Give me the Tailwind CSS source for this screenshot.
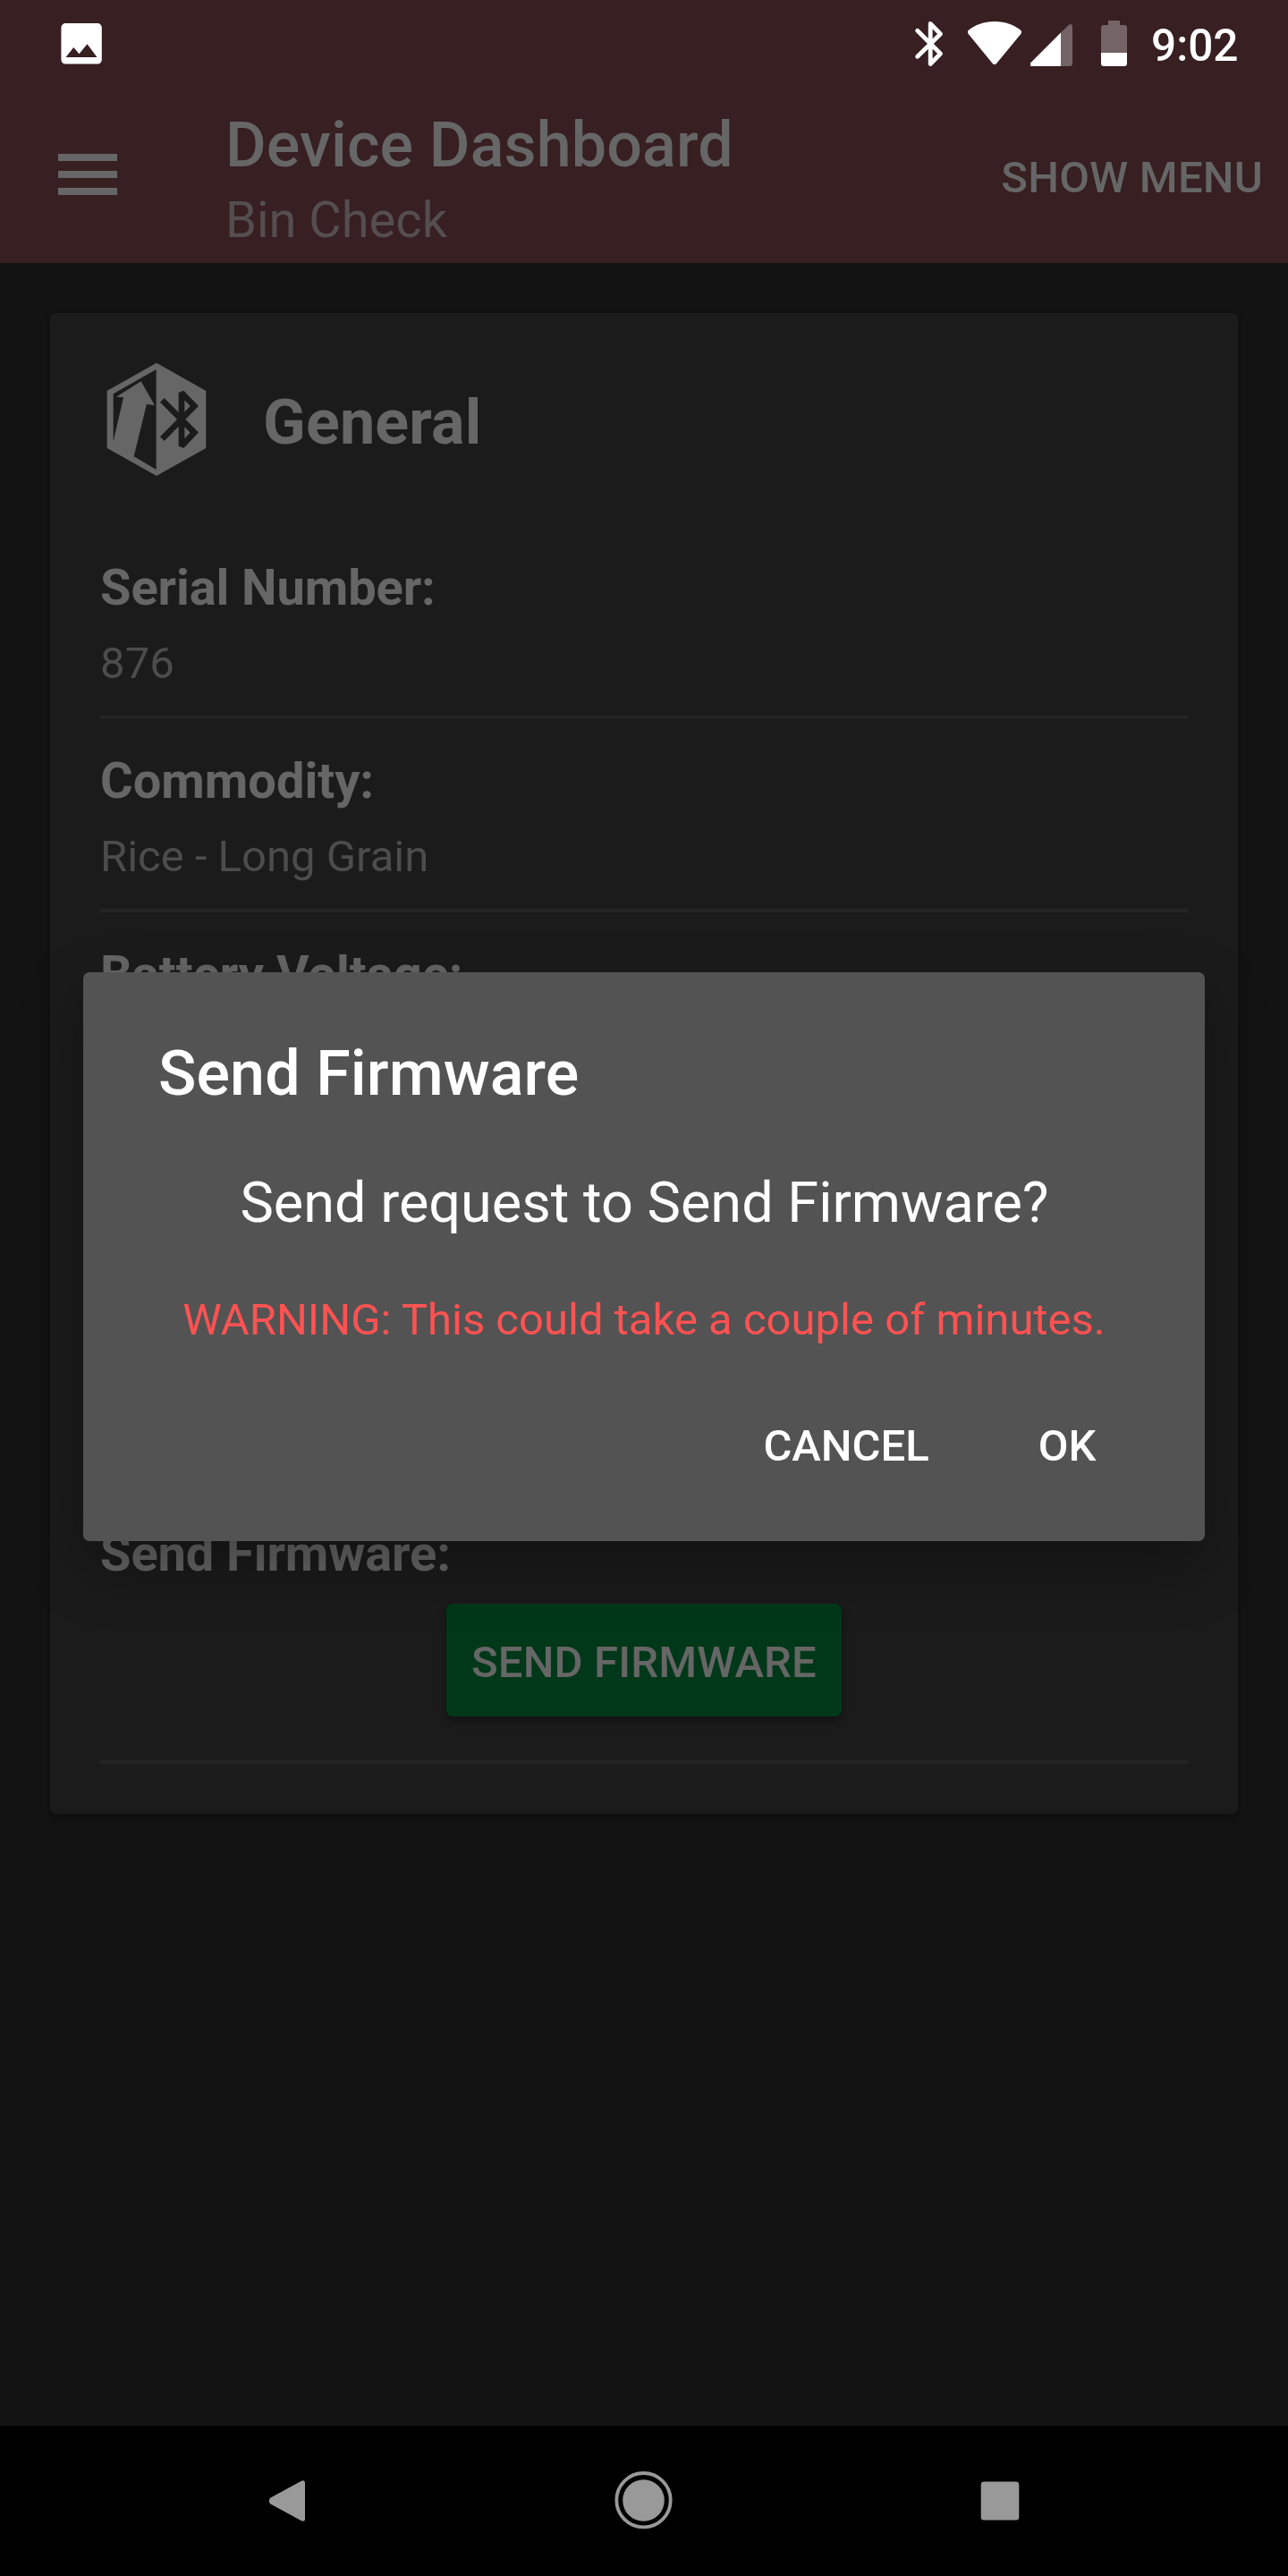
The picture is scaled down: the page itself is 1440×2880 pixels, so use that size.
<!DOCTYPE html>
<html lang="en">
<head>
<meta charset="utf-8">
<title>Device Dashboard</title>
<script src="https://cdn.jsdelivr.net/npm/@tailwindcss/browser@4"></script>
</head>
<body class="bg-[#131313]">
<div class="relative flex h-[2880px] w-[1440px] flex-col overflow-hidden bg-[#131313] font-['Roboto',sans-serif] text-[#666666]">

  <header class="h-[294px] shrink-0 bg-[#371f22]">
    <!-- Status bar -->
    <div class="flex h-[98px] items-start pr-[55px] pl-[68px] text-white">
      <svg class="h-[98px] w-[46px]" viewBox="68 0 46 98"><path fill="currentColor" fill-rule="evenodd" d="M73 26h36a4.800 4.800 0 0 1 4.800 4.800v36a4.800 4.800 0 0 1-4.800 4.800H73.200a4.800 4.800 0 0 1-4.800-4.800v-36A4.800 4.800 0 0 1 73.200 26zM73.500 64h35L97.500 49.300 88.500 60.300 82.300 53z"/></svg>
      <div class="ml-auto flex">
        <svg class="h-[98px] w-[33px]" viewBox="1022 0 33 98" fill="none" stroke="currentColor" stroke-width="4.800" stroke-linecap="round" stroke-linejoin="round"><path d="M1025.700 34.300 1051.500 60 1040.200 71.500V26.500L1051.500 38 1025.700 63.300"/></svg>
        <svg class="ml-[27px] h-[98px] w-[60px]" viewBox="1082 0 60 98" fill="currentColor"><path d="M1083.200 33.500C1090 28 1100 24 1112 24s22 4 28.800 9.500c1.600 1.300 1.600 3 .5 4.500L1114.500 70.500c-1.500 2-3.700 2-5.200 0L1082.700 38c-1.100-1.500-1.100-3.200.5-4.500z"/></svg>
        <svg class="ml-[10px] h-[98px] w-[48px]" viewBox="1152 0 48 98"><path fill="#756465" d="M1186 36.500 1195 27.800c1.800-1.600 4-.6 4 1.700V71a3 3 0 0 1-3 3h-10z"/><path fill="currentColor" d="M1186 36.500V74h-32c-2.500 0-3-2.300-1.500-4z"/></svg>
        <svg class="ml-[31px] h-[98px] w-[29px]" viewBox="1231 0 29 98"><path fill="#756465" d="M1239 23h13v5h5a3 3 0 0 1 3 3v28.500h-29V31a3 3 0 0 1 3-3h5z"/><path fill="currentColor" d="M1231 59h29v12a3 3 0 0 1-3 3h-23a3 3 0 0 1-3-3z"/></svg>
        <span class="mt-[23px] ml-[27px] w-[98px] text-[49.5px] leading-[56px] font-medium whitespace-nowrap">9:02</span>
      </div>
    </div>
    <!-- App bar -->
    <div class="flex h-[196px] items-start pr-[28px] pl-[65px]">
      <button class="mt-[73.5px] flex w-[66px] flex-col gap-[11px]" aria-label="Menu">
        <span class="h-[8px] w-full bg-current"></span>
        <span class="h-[8px] w-full bg-current"></span>
        <span class="h-[8px] w-full bg-current"></span>
      </button>
      <div class="mt-[22px] ml-[121px]">
        <h1 class="text-[70px] leading-[84px] font-medium tracking-[0.15px] whitespace-nowrap">Device Dashboard</h1>
        <p class="mt-[10px] text-[56px] leading-[64px] text-[#554e4f]">Bin Check</p>
      </div>
      <button class="mt-[73px] ml-auto text-[49px] leading-[56px] font-medium tracking-[0.2px] whitespace-nowrap">SHOW MENU</button>
    </div>
  </header>

  <main class="flex-1 px-[56px] pt-[56px]">
    <section class="flex h-[1678px] flex-col rounded-[7px] bg-[#1b1b1b] px-[56px] pb-[56px] shadow-[0_4px_12px_rgba(0,0,0,0.3)]">
      <div class="flex h-[238px] items-start">
        <svg class="mt-[45px] -ml-[2px] h-[145px] w-[130px]" viewBox="0 0 390 435">
          <path fill="#666666" d="M195 32 361 126V318L195 411 29 318V126z"/>
          <path fill="#1b1b1b" d="M194 54 50 136V296L84 148 60 146 143 94 189 175 162 170 119 346 194 390z"/>
          <path fill="none" stroke="#1b1b1b" stroke-width="20" stroke-miterlimit="2" d="M214 157 322 266 279 311V132L322 177 214 287"/>
        </svg>
        <h2 class="mt-[80px] ml-[54px] text-[70px] leading-[84px] font-bold tracking-[0.2px]">General</h2>
      </div>

      <div class="h-[216px] border-b-4 border-[#242424] pt-[37px]">
        <h3 class="text-[56px] leading-[64px] font-bold tracking-[-0.1px]">Serial Number:</h3>
        <p class="mt-[25px] text-[49px] leading-[56px] tracking-[0.1px] text-[#4c4c4c]">876</p>
      </div>
      <div class="h-[216px] border-b-4 border-[#242424] pt-[37px]">
        <h3 class="text-[56px] leading-[64px] font-bold">Commodity:</h3>
        <p class="mt-[25px] text-[49px] leading-[56px] text-[#4c4c4c]">Rice - Long Grain</p>
      </div>
      <div class="h-[648px] pt-[37px]">
        <h3 class="text-[56px] leading-[64px] font-bold">Battery Voltage:</h3>
      </div>
      <div class="flex h-[304px] flex-col border-b-4 border-[#242424] pt-[37px]">
        <h3 class="text-[56px] leading-[64px] font-bold tracking-[-0.1px]">Send Firmware:</h3>
        <button class="mt-[24px] h-[126px] w-[442px] self-center rounded-[7px] bg-[#003819] pt-[5px] text-[49px] leading-[56px] font-medium tracking-[0.15px] whitespace-nowrap shadow-[0_5px_9px_rgba(0,0,0,0.35)]">SEND FIRMWARE</button>
      </div>
    </section>
  </main>

  <!-- Navigation bar -->
  <nav class="flex h-[168px] shrink-0 items-start bg-black pl-[301px] text-[#999999]">
    <svg class="h-[168px] w-[41px]" viewBox="301 2712 41 168" fill="currentColor"><path d="M302.500 2792.500 336.500 2774c2.500-1.500 4.500-.5 4.500 2V2816c0 2.500-2 3.500-4.500 2L302.500 2799.500c-2.200-1.500-2.200-5.500 0-7z"/></svg>
    <svg class="ml-[345px] h-[168px] w-[66px]" viewBox="687 2712 66 168"><circle cx="719.500" cy="2795.200" r="30.200" fill="none" stroke="currentColor" stroke-width="3.800"/><circle cx="719.500" cy="2795.500" r="23.300" fill="currentColor"/></svg>
    <svg class="ml-[343px] h-[168px] w-[44px]" viewBox="1096 2712 44 168"><rect x="1096.700" y="2774.500" width="42.600" height="43" rx="3.500" fill="currentColor"/></svg>
  </nav>

  <!-- Confirmation dialog -->
  <div role="dialog" class="absolute top-[1087px] left-[93px] flex h-[636px] w-[1254px] flex-col rounded-[7px] bg-[#535353] pt-[71px] text-white shadow-[0_28px_70px_rgba(0,0,0,0.32)]">
    <h2 class="pl-[84px] text-[70px] leading-[84px] font-medium tracking-[0.1px]">Send Firmware</h2>
    <p class="mt-[67px] pl-px text-center text-[63px] leading-[72px] whitespace-nowrap">Send request to Send Firmware?</p>
    <p class="mt-[67px] text-center text-[49px] leading-[56px] tracking-[0.02px] whitespace-nowrap text-[#ff5252]">WARNING: This could take a couple of minutes.</p>
    <div class="mt-[85px] flex justify-end gap-[122px] pr-[121.5px] text-[49px] leading-[56px] font-medium">
      <button>CANCEL</button>
      <button>OK</button>
    </div>
  </div>
</div>
</body>
</html>
